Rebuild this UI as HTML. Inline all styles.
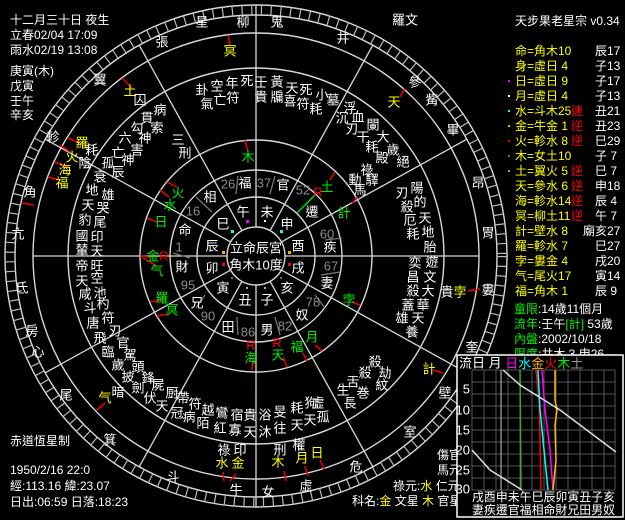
<!DOCTYPE html>
<html><head><meta charset="utf-8"><style>
html,body{margin:0;padding:0;background:#000;}
svg{display:block}
text{font-family:"Liberation Sans","Noto Sans CJK TC","Noto Sans CJK SC",sans-serif;font-size:13px;fill:#fff;text-anchor:middle;dominant-baseline:central}
.l{text-anchor:start;font-size:12px}
.y{fill:#ffff00}.g{fill:#00ee00}.r{fill:#ff0000}.n{fill:#8c8c8c}.m{fill:#ff00ff}.c{fill:#00ffff}.o{fill:#ffb000}.gr{fill:#999}
</style></head><body>
<svg width="625" height="520" viewBox="0 0 625 520" xmlns="http://www.w3.org/2000/svg">
<rect width="625" height="520" fill="#000"/>
<g fill="none" stroke="#d8d8d8" stroke-width="1.4">
<circle cx="256" cy="256" r="29"/>
<circle cx="256" cy="256" r="59"/>
<circle cx="256" cy="256" r="86"/>
<circle cx="256" cy="256" r="116"/>
<circle cx="256" cy="256" r="188"/>
<circle cx="256" cy="256" r="223"/>
<circle cx="256" cy="256" r="241"/>
<circle cx="256" cy="256" r="251"/>
</g>
<circle cx="256" cy="256" r="246" fill="none" stroke="#bbb" stroke-width="10" stroke-dasharray="1.2 8.5"/>
<g stroke="#d8d8d8" stroke-width="1.3">
<line x1="256" y1="5" x2="256" y2="227"/>
<line x1="256" y1="285" x2="256" y2="507"/>
<line x1="33" y1="256" x2="227" y2="256"/>
<line x1="285" y1="256" x2="479" y2="256"/>
<line x1="281.4" y1="241.9" x2="466.8" y2="139.2"/>
<line x1="270.1" y1="230.6" x2="372.8" y2="45.2"/>
<line x1="241.9" y1="230.6" x2="139.2" y2="45.2"/>
<line x1="230.6" y1="241.9" x2="45.2" y2="139.2"/>
<line x1="230.6" y1="270.1" x2="45.2" y2="372.8"/>
<line x1="241.9" y1="281.4" x2="139.2" y2="466.8"/>
<line x1="270.1" y1="281.4" x2="372.8" y2="466.8"/>
<line x1="281.4" y1="270.1" x2="466.8" y2="372.8"/>
</g>
<g stroke="#777" stroke-width="1.3">
<line x1="238" y1="176" x2="236" y2="194"/><line x1="275" y1="176" x2="270" y2="194"/>
<line x1="325" y1="240" x2="342" y2="238"/><line x1="315" y1="295" x2="325" y2="308"/>
<line x1="275" y1="317" x2="280" y2="335"/><line x1="237" y1="317" x2="238" y2="335"/>
<line x1="205" y1="295" x2="196" y2="308"/><line x1="173" y1="253" x2="190" y2="258"/>
<line x1="196" y1="197" x2="212" y2="212"/><line x1="321" y1="275" x2="340" y2="272"/>
</g>
<line x1="297" y1="213" x2="315" y2="195" stroke="#00dd00" stroke-width="1.5"/>
<g stroke="#ee0000" stroke-width="1.5">
<line x1="245" y1="140" x2="248" y2="152"/><line x1="167" y1="182" x2="177" y2="187"/>
<line x1="160" y1="190" x2="169" y2="197"/><line x1="147" y1="218" x2="157" y2="222"/>
<line x1="140" y1="256" x2="152" y2="257"/><line x1="143" y1="258" x2="157" y2="266"/>
<line x1="150" y1="302" x2="162" y2="300"/><line x1="157" y1="316" x2="168" y2="314"/>
<line x1="253" y1="360" x2="252" y2="370"/><line x1="283" y1="357" x2="287" y2="367"/>
<line x1="303" y1="353" x2="307" y2="361"/><line x1="315" y1="345" x2="322" y2="351"/>
<line x1="352" y1="302" x2="360" y2="305"/><line x1="352" y1="203" x2="358" y2="197"/>
<line x1="330" y1="180" x2="335" y2="172"/>
<line x1="122" y1="78" x2="132" y2="88"/><line x1="228" y1="35" x2="230" y2="45"/>
<line x1="68" y1="138" x2="80" y2="143"/><line x1="60" y1="145" x2="70" y2="152"/>
<line x1="55" y1="162" x2="68" y2="167"/><line x1="48" y1="177" x2="60" y2="180"/>
<line x1="400" y1="97" x2="405" y2="88"/><line x1="433" y1="370" x2="443" y2="373"/>
<line x1="468" y1="291" x2="480" y2="289"/><line x1="97" y1="410" x2="105" y2="403"/>
<line x1="223" y1="472" x2="224" y2="481"/><line x1="230" y1="481" x2="236" y2="474"/>
<line x1="284" y1="471" x2="286" y2="481"/><line x1="305" y1="466" x2="308" y2="476"/>
<line x1="320" y1="460" x2="324" y2="469"/><line x1="22" y1="203" x2="34" y2="205"/>
</g>
<text x="256" y="248">立命辰宮</text><text x="256" y="265">角木10度</text>
<text x="243" y="212">午</text><text x="267" y="212">未</text><text x="287" y="224">申</text><text x="298" y="246">酉</text>
<text x="298" y="268">戌</text><text x="287" y="288">亥</text><text x="267" y="300">子</text><text x="245" y="300">丑</text>
<text x="223" y="288">寅</text><text x="212" y="268">卯</text><text x="212" y="246">辰</text><text x="223" y="224">巳</text>
<g>
<rect x="246" y="220" width="3" height="3" fill="#f0f"/><rect x="264" y="220" width="2" height="2" fill="#fff"/>
<rect x="280" y="230" width="3" height="3" fill="#0ff"/><rect x="288" y="251" width="3" height="3" fill="#fa0"/>
<rect x="288" y="263" width="3" height="3" fill="#f00"/><rect x="280" y="277" width="2" height="2" fill="#393"/>
<rect x="264" y="287" width="2" height="2" fill="#aaa"/><rect x="246" y="287" width="2" height="2" fill="#aaa"/>
<rect x="231" y="277" width="2" height="2" fill="#393"/><rect x="222" y="263" width="3" height="3" fill="#f00"/>
<rect x="222" y="251" width="3" height="3" fill="#fa0"/><rect x="231" y="230" width="3" height="3" fill="#0ff"/>
</g>
<text x="245" y="183">福</text><text x="283" y="185">官</text><text x="312" y="212">遷</text><text x="330" y="247">疾</text>
<text x="327" y="283">妻</text><text x="302" y="315">奴</text><text x="267" y="330">男</text><text x="228" y="327">田</text>
<text x="197" y="303">兄</text><text x="182" y="267">財</text><text x="185" y="230">命</text><text x="210" y="197">相</text>
<g>
<text x="228" y="184" style="fill:#8c8c8c">26</text><text x="264" y="183" style="fill:#8c8c8c">37</text><text x="303" y="190" style="fill:#8c8c8c">52</text>
<text x="327" y="234" style="fill:#8c8c8c">60</text><text x="331" y="266" style="fill:#8c8c8c">67</text><text x="313" y="302" style="fill:#8c8c8c">78</text>
<text x="285" y="326" style="fill:#8c8c8c">82</text><text x="248" y="332" style="fill:#8c8c8c">86</text><text x="208" y="316" style="fill:#8c8c8c">90</text>
<text x="188" y="285" style="fill:#8c8c8c">95</text><text x="179" y="247" style="fill:#8c8c8c">1</text><text x="193" y="211" style="fill:#8c8c8c">16</text>
</g>
<text class="g" x="248" y="157">木</text><text class="g" x="178" y="193">火</text><text class="g" x="170" y="205">水</text>
<text class="g" x="161" y="222">日</text><text class="g" x="153" y="256">金</text><text class="r" x="164" y="256">R</text>
<text class="g" x="157" y="271">气</text><text class="g" x="162" y="298">羅</text><text class="g" x="172" y="310">冥</text>
<text class="g" x="251" y="358">海</text><text class="r" x="251" y="345">R</text>
<text class="g" x="278" y="355">天</text><text class="r" x="277" y="343">R</text>
<text class="g" x="297" y="347">福</text><text class="g" x="312" y="337">月</text><text class="g" x="349" y="300">孛</text>
<text class="g" x="344" y="213">計</text><text class="g" x="327" y="187">土</text><text class="r" x="318" y="192">R</text>
<text class="y" x="130" y="91">土</text><text class="y" x="230" y="51">冥</text><text class="y" x="82" y="143">羅</text>
<text class="y" x="72" y="157">火</text><text class="y" x="65" y="170">海</text><text class="y" x="62" y="183">福</text>
<text class="y" x="394" y="102">天</text><text class="y" x="429" y="369">計</text><text class="y" x="460" y="292">孛</text>
<text class="y" x="105" y="398">气</text><text class="y" x="222" y="463">水</text><text class="y" x="238" y="463">金</text>
<text class="y" x="278" y="462">木</text><text class="y" x="302" y="458">月</text><text class="y" x="317" y="453">日</text>
<text x="202" y="22">星</text><text x="243" y="22">柳</text><text x="277" y="22">鬼</text><text x="162" y="42">張</text>
<text x="100" y="80">翼</text><text x="53" y="137">軫</text><text x="30" y="192">角</text><text x="18" y="234">亢</text>
<text x="22" y="288">氐</text><text x="32" y="331">房</text><text x="38" y="352">心</text><text x="66" y="395">尾</text>
<text x="110" y="440">箕</text><text x="173" y="477">斗</text><text x="236" y="490">牛</text><text x="268" y="492">女</text>
<text x="306" y="486">虛</text><text x="356" y="467">危</text><text x="410" y="432">室</text><text x="445" y="393">壁</text>
<text x="472" y="347">奎</text><text x="488" y="290">婁</text><text x="488" y="233">胃</text><text x="478" y="183">昂</text>
<text x="453" y="130">畢</text><text x="432" y="100">觜</text><text x="415" y="82">參</text><text x="343" y="38">井</text>
<text x="405" y="20">羅文</text>
<text x="202" y="90">卦</text><text x="217" y="86">空</text><text x="232" y="83">年</text><text x="247" y="81">死</text>
<text x="207" y="104">氣</text><text x="220" y="100">亡</text><text x="233" y="98">符</text>
<text x="261" y="82">壬</text><text x="277" y="82">黃</text><text x="292" y="88">天</text><text x="306" y="90">死</text>
<text x="261" y="97">貴</text><text x="277" y="97">牖</text><text x="290" y="101">喜</text><text x="303" y="104">符</text>
<text x="322" y="95">小</text><text x="316" y="109">耗</text><text x="333" y="100">墓</text>
<text x="350" y="108">浮</text><text x="342" y="118">沉</text><text x="358" y="117">血</text><text x="352" y="129">刃</text>
<text x="373" y="125">闌</text><text x="363" y="137">干</text><text x="383" y="137">大</text><text x="372" y="147">耗</text>
<text x="393" y="150">歲</text><text x="382" y="158">殿</text><text x="403" y="162">絕</text>
<text x="367" y="170">祿</text><text x="355" y="180">動</text><text x="372" y="180">驛</text><text x="360" y="190">馬</text>
<text x="417" y="188">陽</text><text x="402" y="193">刃</text><text x="420" y="202">的</text><text x="407" y="207">殺</text>
<text x="410" y="220">厄</text><text x="425" y="218">天</text><text x="413" y="234">耗</text><text x="428" y="232">地</text>
<text x="430" y="247">胎</text><text x="415" y="263">奕</text><text x="432" y="262">遊</text>
<text x="413" y="277">昌</text><text x="430" y="277">文</text><text x="413" y="291">殺</text><text x="428" y="291">大</text>
<text x="408" y="305">蓋</text><text x="423" y="305">華</text><text x="402" y="318">雄</text><text x="418" y="318">天</text>
<text x="412" y="332">養</text><text x="447" y="292">貴</text>
<text x="140" y="100">囚</text><text x="160" y="110">病</text><text x="147" y="118">貫</text>
<text x="137" y="128">勾</text><text x="157" y="128">索</text><text x="125" y="138">六</text><text x="145" y="138">神</text>
<text x="118" y="153">亡</text><text x="137" y="150">害</text><text x="108" y="163">孤</text><text x="128" y="160">神</text>
<text x="118" y="172">辰</text><text x="178" y="140">三</text><text x="185" y="153">刑</text>
<text x="92" y="150">耗</text><text x="85" y="163">陰</text><text x="100" y="177">衰</text>
<text x="92" y="190">地</text><text x="108" y="195">雄</text><text x="88" y="205">天</text><text x="103" y="208">哭</text>
<text x="85" y="220">豹</text><text x="100" y="222">尾</text><text x="82" y="236">國</text><text x="97" y="237">印</text>
<text x="82" y="250">輦</text><text x="97" y="251">天</text>
<text x="82" y="266">帝</text><text x="97" y="266">旺</text><text x="82" y="281">天</text><text x="97" y="278">空</text>
<text x="85" y="294">咸</text><text x="100" y="293">池</text><text x="90" y="308">斗</text><text x="103" y="304">杓</text>
<text x="93" y="323">唐</text><text x="108" y="318">符</text><text x="100" y="338">飛</text><text x="115" y="331">刃</text>
<text x="108" y="352">臨</text><text x="123" y="343">官</text><text x="118" y="365">歲</text><text x="130" y="355">駕</text>
<text x="128" y="377">披</text><text x="138" y="367">頭</text><text x="138" y="388">劍</text><text x="148" y="378">鋒</text>
<text x="150" y="398">伏</text><text x="158" y="385">屍</text><text x="162" y="406">天</text><text x="172" y="393">厨</text>
<text x="118" y="392">暗</text>
<text x="183" y="398">帶</text><text x="177" y="413">冠</text><text x="195" y="404">符</text><text x="189" y="417">病</text>
<text x="208" y="410">越</text><text x="203" y="423">陌</text><text x="222" y="413">鸞</text><text x="220" y="428">紅</text>
<text x="237" y="415">宿</text><text x="235" y="430">寡</text><text x="250" y="415">貴</text><text x="250" y="432">天</text>
<text x="265" y="415">浴</text><text x="265" y="432">沐</text><text x="280" y="412">旻</text><text x="280" y="428">往</text>
<text x="297" y="408">耗</text><text x="297" y="425">天</text><text x="311" y="403">狗</text><text x="310" y="420">天</text>
<text x="318" y="403">虛</text><text x="323" y="417">孤</text>
<text x="375" y="362">殺</text><text x="365" y="373">殺</text><text x="385" y="373">劫</text><text x="353" y="382">舌</text>
<text x="382" y="385">紋</text><text x="363" y="393">巻</text><text x="343" y="390">生</text><text x="350" y="403">長</text>
<text x="224" y="450">祿</text><text x="240" y="450">印</text><text x="280" y="450">刑</text><text x="299" y="445">權</text>
<text class="l" x="10" y="20">十二月三十日 夜生</text>
<text class="l" x="10" y="35">立春02/04 17:09</text>
<text class="l" x="10" y="50">雨水02/19 13:08</text>
<text class="l" x="10" y="71">庚寅(木)</text><text class="l" x="10" y="86">戊寅</text>
<text class="l" x="10" y="101">壬午</text><text class="l" x="10" y="115">辛亥</text>
<text class="l" x="10" y="441">赤道恆星制</text>
<text class="l" x="10" y="470">1950/2/16 22:0</text>
<text class="l" x="10" y="486">經:113.16 緯:23.07</text>
<text class="l" x="10" y="502">日出:06:59 日落:18:23</text>
<text class="l" x="437" y="455">傷官</text><text class="l" x="437" y="470">馬元</text>
<text class="l" x="393" y="486">祿元:<tspan class="y">水</tspan> 仁元</text>
<text class="l" x="352" y="501">科名:<tspan class="y">金</tspan> 文星 <tspan class="y">木</tspan> 官星</text>
<text class="l" x="515" y="21">天步果老星宗 v0.34</text>
<g xml:space="preserve">
<text class="l y" x="515" y="51">命=角木10</text><text class="l" x="595" y="51">辰17</text>
<text class="l y" x="515" y="66">身=虛日  4</text><text class="l" x="595" y="66">子13</text>
<text class="l y" x="515" y="81">日=虛日  9</text><text class="l" x="595" y="81">子17</text>
<text class="l y" x="515" y="96">月=虛日  4</text><text class="l" x="595" y="96">子13</text>
<text class="l y" x="515" y="111">水=斗木25<tspan class="r" x="571">速</tspan></text><text class="l" x="595" y="111">丑21</text>
<text class="l y" x="515" y="126">金=牛金  1<tspan class="r" x="571">逆</tspan></text><text class="l" x="595" y="126">丑23</text>
<text class="l y" x="515" y="141">火=軫水  8<tspan class="r" x="571">逆</tspan></text><text class="l" x="595" y="141">巳29</text>
<text class="l y" x="515" y="156">木=女土10</text><text class="l" x="595" y="156">子  7</text>
<text class="l y" x="515" y="171">土=翼火  5<tspan class="r" x="571">逆</tspan></text><text class="l" x="595" y="171">巳  7</text>
<text class="l y" x="515" y="186">天=參水  6<tspan class="r" x="571">逆</tspan></text><text class="l" x="595" y="186">申18</text>
<text class="l y" x="515" y="201">海=軫水14<tspan class="r" x="571">逆</tspan></text><text class="l" x="595" y="201">辰  4</text>
<text class="l y" x="515" y="216">冥=柳土11<tspan class="r" x="571">逆</tspan></text><text class="l" x="595" y="216">午  7</text>
<text class="l y" x="515" y="231">計=壁水  8</text><text class="l" x="583" y="231">廟亥27</text>
<text class="l y" x="515" y="246">羅=軫水  7</text><text class="l" x="595" y="246">巳27</text>
<text class="l y" x="515" y="261">孛=婁金  4</text><text class="l" x="595" y="261">戌20</text>
<text class="l y" x="515" y="276">气=尾火17</text><text class="l" x="595" y="276">寅14</text>
<text class="l y" x="515" y="291">福=角木  1</text><text class="l" x="595" y="291">辰  9</text>
</g>
<rect x="508" y="80" width="2" height="2" fill="#f0f"/><rect x="508" y="95" width="2" height="2" fill="#fff"/>
<rect x="508" y="110" width="2" height="2" fill="#0ff"/><rect x="508" y="125" width="2" height="2" fill="#fa0"/>
<rect x="508" y="140" width="2" height="2" fill="#f00"/><rect x="508" y="155" width="2" height="2" fill="#393"/>
<rect x="508" y="170" width="2" height="2" fill="#999"/>
<text class="l" x="514" y="309"><tspan class="g">童限</tspan>:14歲11個月</text>
<text class="l" x="514" y="324"><tspan class="g">流年</tspan>:壬午<tspan class="g">[計]</tspan>  53歲</text>
<text class="l" x="514" y="339"><tspan class="g">內盤</tspan>:2002/10/18</text>
<text class="l" x="514" y="354"><tspan class="g">限度</tspan>:井木 3  申26</text>
<rect x="457" y="355" width="166" height="162" fill="#000" stroke="#fff" stroke-width="1.5"/>
<text class="l" x="459" y="363" style="font-size:13px">流日 月 <tspan class="m">日</tspan><tspan class="c">水</tspan><tspan class="o">金</tspan><tspan class="r">火</tspan><tspan class="g">木</tspan><tspan class="gr">土</tspan></text>
<g stroke="#555" stroke-width="1">
<line x1="472" y1="370" x2="615" y2="370"/><line x1="472" y1="382" x2="615" y2="382"/><line x1="472" y1="394" x2="615" y2="394"/>
<line x1="472" y1="406" x2="615" y2="406"/><line x1="472" y1="418" x2="615" y2="418"/><line x1="472" y1="430" x2="615" y2="430"/>
<line x1="472" y1="442" x2="615" y2="442"/><line x1="472" y1="454" x2="615" y2="454"/><line x1="472" y1="466" x2="615" y2="466"/>
<line x1="472" y1="478" x2="615" y2="478"/><line x1="472" y1="490" x2="615" y2="490"/>
<line x1="472" y1="370" x2="472" y2="490"/><line x1="484" y1="370" x2="484" y2="490"/><line x1="496" y1="370" x2="496" y2="490"/>
<line x1="508" y1="370" x2="508" y2="490"/><line x1="520" y1="370" x2="520" y2="490"/><line x1="532" y1="370" x2="532" y2="490"/>
<line x1="544" y1="370" x2="544" y2="490"/><line x1="556" y1="370" x2="556" y2="490"/><line x1="568" y1="370" x2="568" y2="490"/>
<line x1="580" y1="370" x2="580" y2="490"/><line x1="592" y1="370" x2="592" y2="490"/><line x1="604" y1="370" x2="604" y2="490"/>
<line x1="615" y1="370" x2="615" y2="490"/>
</g>
<g fill="none" stroke-width="1.5">
<line x1="501" y1="370" x2="501" y2="490" stroke="#888"/>
<line x1="520" y1="370" x2="521" y2="490" stroke="#3a3"/>
<polyline points="536,370 539,400 540,440 541,490" stroke="#f00"/>
<polyline points="538,370 540,410 544,450 548,490" stroke="#0ff"/>
<polyline points="542,370 545,410 550,450 553,490" stroke="#f0f"/>
<polyline points="555,370 555,400 557,410 555,425 556,460 553,490" stroke="#fb0"/>
<polyline points="503,370 520,385 560,410 600,440 616,452" stroke="#ddd"/>
<polyline points="472,450 490,470 522,490" stroke="#ddd"/>
</g>
<text x="470" y="389" style="text-anchor:end">5</text><text x="470" y="410" style="text-anchor:end">10</text>
<text x="470" y="430" style="text-anchor:end">15</text><text x="470" y="450" style="text-anchor:end">20</text>
<text x="470" y="470" style="text-anchor:end">25</text><text x="470" y="489" style="text-anchor:end">30</text>
<text class="l" x="472" y="497" textLength="143" lengthAdjust="spacingAndGlyphs" style="font-size:12px">戌酉申未午巳辰卯寅丑子亥</text>
<text class="l" x="472" y="510" textLength="143" lengthAdjust="spacingAndGlyphs" style="font-size:12px">妻疾遷官福相命財兄田男奴</text>
</svg>
</body></html>
